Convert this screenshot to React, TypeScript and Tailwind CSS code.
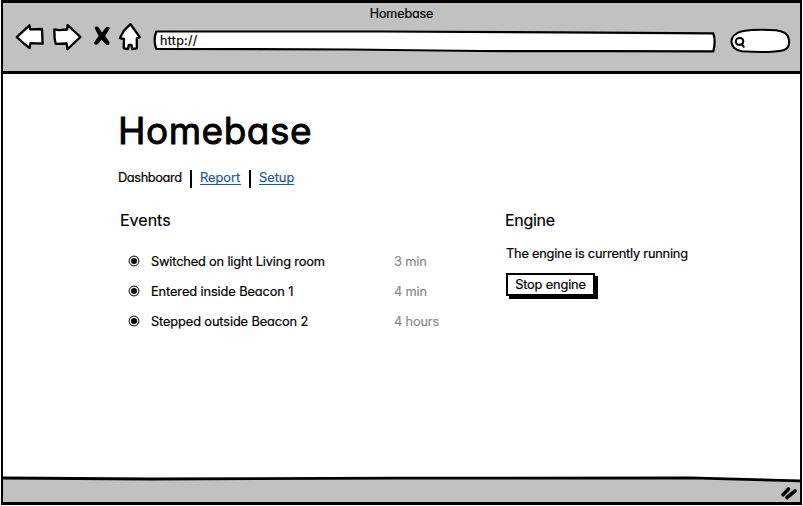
import type { ReactNode } from "react";

const ink = { stroke: "#000", strokeLinejoin: "round", strokeLinecap: "round" } as const;

function NavIcons() {
  return (
    <svg className="ml-[13px] mt-[19px] h-[34px] w-[130px] shrink-0" viewBox="13 19 130 34" fill="#fff" strokeWidth="2.3" {...ink}>
      <path d="M16.8 37.2 29.4 25.3 30.2 29.3 42 29 42.6 43.7 30.4 43.2 29.6 48 24 43.6Z" />
      <path d="M54.3 29.4 59 30.1 67.2 29.5 67.6 25.2 80.5 37 67.5 49.2 66.6 43.5 55.7 43.8 54.7 39Z" />
      <path d="M130.5 24.2Q134.8 30 139.8 37.2L136.8 38.3 136.8 48.4 132.2 49 131.5 45 128.8 45 128 49 123.7 48.4 124 39 119.8 38.2 124 30.5Z" />
      <path d="M94.5 28Q96 25.5 98.7 27.5L102 32.5 106 27.2Q109.5 25.6 109.8 28.5L105.2 36 109.5 42.2Q109.6 45.6 106.5 44.9L101.5 39.8 98 44Q94.6 46 94 42.5L98.7 36Z" fill="#000" stroke="none" />
    </svg>
  );
}

function AddressBar() {
  return (
    <div className="relative ml-[9px] mt-[29px] h-[25px] w-[566px] shrink-0">
      <svg className="absolute inset-0 h-full w-full" viewBox="152 29 566 25" fill="#fff" strokeWidth="2.2" {...ink}>
        <path d="M156.3 31.5 380 31.5 560 32.4 713.3 33.3Q716 41 713.3 51.4L600 51.2 480 51 350 49.5 156.2 48.9Q153 40 156.3 31.5Z" />
      </svg>
      <span className="relative ml-[8px] block pt-[3px] text-[12.5px] leading-[17px] tracking-[0.3px]">http://</span>
    </div>
  );
}

function SearchBox() {
  return (
    <svg className="ml-[11px] mt-[26px] h-[30px] w-[64px] shrink-0" viewBox="729 26 64 30" fill="#fff" strokeWidth="2.1" {...ink}>
      <path d="M743 31Q757 28.8 776 30.3Q787.5 32 788.5 38Q791 47 784 50Q771 53.3 742 51.3C728 49 727.5 34.5 743 31Z" />
      <path d="M735.8 42C735.2 37 742.8 36.5 743.3 41C743.5 45.3 736.3 46.4 735.8 42ZM741.8 44.3 743.8 46.8" fill="none" strokeWidth="2" />
    </svg>
  );
}

function Bullet() {
  return (
    <svg className="h-[12px] w-[12px] shrink-0" viewBox="0 0 12 12">
      <circle cx="6" cy="6" r="4.9" fill="#fff" stroke="#000" strokeWidth="1" />
      <circle cx="6" cy="6" r="3" />
    </svg>
  );
}

function Row({ label, time }: { label: ReactNode; time: string }) {
  return (
    <li className="flex h-[30px] items-center">
      <Bullet />
      <span className="ml-[11px] w-[243px] pt-[2px]">{label}</span>
      <span className="pt-[2px] text-[#8c8c8c] [-webkit-text-stroke:0.2px_#8c8c8c]">{time}</span>
    </li>
  );
}

export default function App() {
  return (
    <div className="flex h-[506px] w-[803px] flex-col overflow-hidden bg-white pb-px pl-px pr-px font-['Inter',sans-serif] text-[12.8px] font-normal text-black [-webkit-text-stroke:0.2px_currentColor] [font-feature-settings:'cv11','calt'_0]">
      <div className="flex flex-1 flex-col border-x-[2px] border-y-[3px] border-black">
        <header className="relative h-[71px] shrink-0 border-b-[3px] border-black bg-[#c1c1c1]">
          <div className="absolute inset-x-0 top-[2px] text-center text-[12.5px] leading-[17px] tracking-[-0.1px]">Homebase</div>
          <div className="-ml-[3px] -mt-[3px] flex">
            <NavIcons />
            <AddressBar />
            <SearchBox />
          </div>
        </header>

        <main className="flex-1 pl-[115px] pt-[33px]">
          <h1 className="text-[37px] font-[400] leading-[48px] tracking-[0.5px] [-webkit-text-stroke:0.9px_#000]">Homebase</h1>
          <nav className="mt-[13px] flex h-[20px] items-center">
            <span className="w-[64px] tracking-[-0.38px]">Dashboard</span>
            <i className="mx-[8px] mt-[2px] h-[18px] w-[2px] bg-black" />
            <a className="h-[14px] w-[41px] border-b border-[#1b5aa0] leading-[13px] text-[#1b5aa0]">Report</a>
            <i className="mx-[8px] mt-[2px] h-[18px] w-[2px] bg-black" />
            <a className="h-[14px] w-[35px] border-b border-[#1b5aa0] leading-[13px] text-[#1b5aa0]">Setup</a>
          </nav>
          <div className="mt-[21px] flex">
            <section className="w-[385px] pl-[2px]">
              <h2 className="text-[16px] leading-[22px]">Events</h2>
              <ul className="mt-[15px] pl-[8px] tracking-[-0.17px]">
                <Row label="Switched on light Living room" time="3 min" />
                <Row label={<span className="tracking-[-0.1px]">Entered inside Beacon 1</span>} time="4 min" />
                <Row label={<span className="tracking-[-0.12px]">Stepped outside Beacon 2</span>} time="4 hours" />
              </ul>
            </section>
            <section className="pl-[2px]">
              <h2 className="text-[16px] leading-[22px] tracking-[-0.3px]">Engine</h2>
              <p className="mt-[14px] pl-px leading-[18px] tracking-[-0.22px]">The engine is currently running</p>
              <button className="ml-px mt-[10px] flex h-[23px] w-[89px] items-center justify-center whitespace-nowrap border-2 border-black bg-white tracking-[-0.15px] shadow-[3px_3px_0_#000]">
                Stop engine
              </button>
            </section>
          </div>
        </main>

        <footer className="relative h-[27px] shrink-0">
          <svg className="block h-full w-full" viewBox="3 475 797 27" preserveAspectRatio="none" {...ink}>
            <path d="M0 478 150 479 400 478.2 690 477.8 803 481V510H0Z" fill="#c1c1c1" strokeWidth="2.8" />
            <path d="M783 494.8 788.5 489M787 497.5 795 491" fill="none" strokeWidth="3.6" />
          </svg>
        </footer>
      </div>
    </div>
  );
}
